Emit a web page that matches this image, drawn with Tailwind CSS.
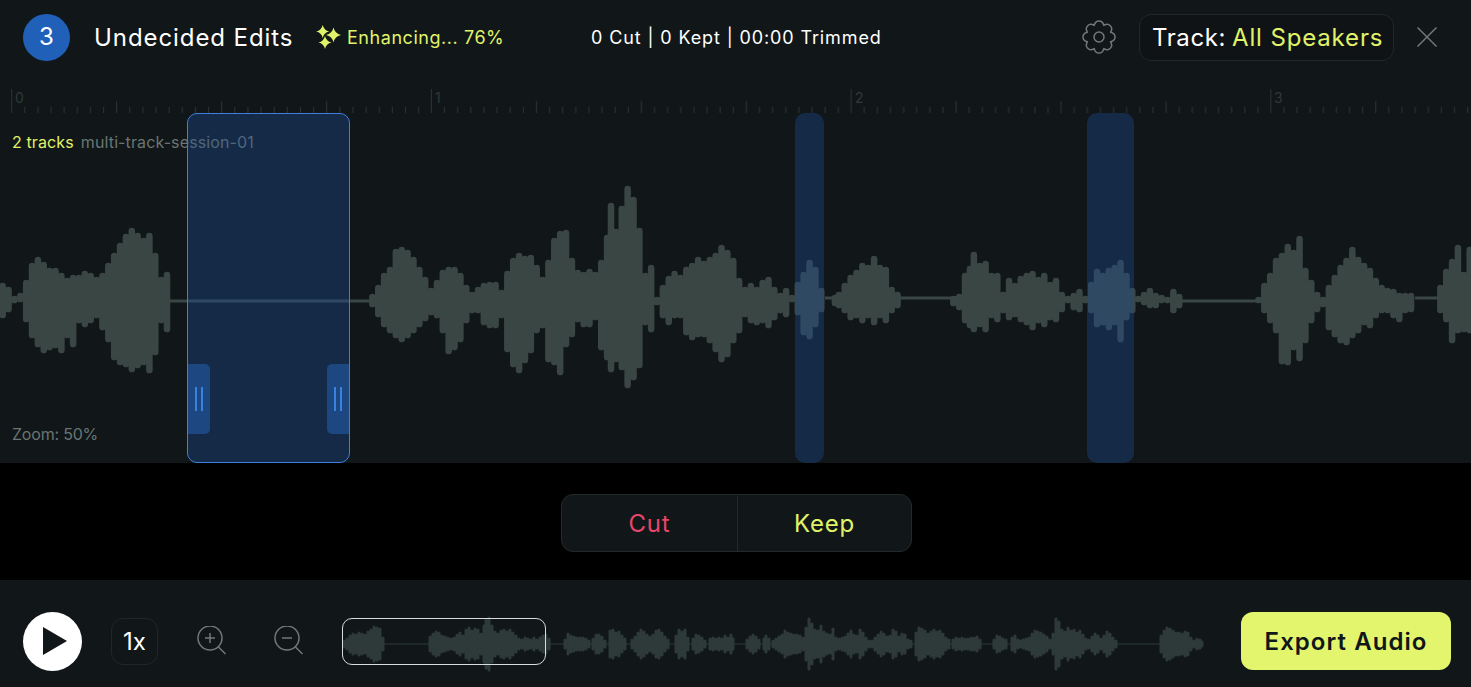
<!DOCTYPE html>
<html lang="en">
<head>
<meta charset="utf-8">
<title>Undecided Edits</title>
<script src="https://cdn.jsdelivr.net/npm/@tailwindcss/browser@4"></script>
</head>
<body class="bg-black">
<main class="flex flex-col w-[1471px] h-[687px] overflow-hidden bg-black text-white font-[Inter,sans-serif]">
  <header class="h-[83px] pb-[9px] shrink-0 bg-[#111618] flex items-center pl-[23px]">
    <div class="w-[47px] h-[47px] rounded-full bg-[#2160b8] flex items-center justify-center text-[24px]">3</div>
    <h1 class="ml-[24px] w-[199px] pt-[2px] text-[24px] tracking-[0.92px] whitespace-nowrap">Undecided Edits</h1>
    <svg class="ml-[24px] w-[24px] h-[24px] overflow-visible" viewBox="0 0 24 24" fill="#e0f368"><path d="M5.7 0 Q6.9 5.3 12.2 6.5 Q6.9 7.7 5.7 13 Q4.5 7.7 -.8 6.5 Q4.5 5.3 5.7 0Z"/><path d="M16.5 2.5 Q17.8 8.7 24 10 Q17.8 11.3 16.5 17.5 Q15.2 11.3 9 10 Q15.2 8.7 16.5 2.5Z"/><path d="M8 11 Q9.2 16.3 14.5 17.5 Q9.2 18.7 8 24 Q6.8 18.7 1.5 17.5 Q6.8 16.3 8 11Z"/></svg>
    <span class="ml-[6px] w-[244px] text-[18px] text-[#e0f368] tracking-[0.55px] whitespace-nowrap">Enhancing... 76%</span>
    <span class="text-[18px] tracking-[0.88px] whitespace-nowrap">0 Cut | 0 Kept | 00:00 Trimmed</span>
    <svg class="ml-auto w-[36px] h-[36px] translate-x-[1px]" viewBox="-1 -1 36 36" fill="none" stroke="#6f7a78" stroke-width="1.5" stroke-linejoin="round"><path d="M12.22 5.45C13.5-.5 20.5-.5 21.78 5.45C26.9 2.15 31.85 7.1 28.55 12.22C34.5 13.5 34.5 20.5 28.55 21.78C31.85 26.9 26.9 31.85 21.78 28.55C20.5 34.5 13.5 34.5 12.22 28.55C7.1 31.85 2.15 26.9 5.45 21.78C-.5 20.5-.5 13.5 5.45 12.22C2.15 7.1 7.1 2.15 12.22 5.45Z"/><circle cx="17" cy="17" r="5"/></svg>
    <div class="ml-[23px] w-[255px] h-[47px] pt-[2px] rounded-[12px] border border-[#202928] bg-[#0f1315] flex items-center pl-[12px] text-[24px] whitespace-nowrap"><span class="tracking-[0.6px]">Track:</span><span class="ml-[6px] text-[#e0f368] tracking-[0.85px]">All Speakers</span></div>
    <svg class="ml-[22px] mr-[33px] w-[22px] h-[22px]" viewBox="0 0 22 22" fill="none" stroke="#6f7a78" stroke-width="1.5"><path d="M1.5 1.5 20.5 20.5M20.5 1.5 1.5 20.5"/></svg>
  </header>

  <section class="relative h-[380px] shrink-0 bg-[#111618] overflow-hidden">
    <svg class="absolute left-0 top-[6px] w-[1471px] h-[24px]" viewBox="0 0 1471 24">
      <defs><pattern id="ticks" patternUnits="userSpaceOnUse" x="11.2" y="0" width="419.7" height="24"><path fill="none" stroke="#2b3533" stroke-width="1" d="M.5 0V24M105.5 12V24M210.5 12V24M315.5 12V24M13.6 18V24M26.75 18V24M39.9 18V24M53 18V24M66.1 18V24M79.25 18V24M92.4 18V24M118.6 18V24M131.75 18V24M144.9 18V24M158 18V24M171.1 18V24M184.25 18V24M197.4 18V24M223.6 18V24M236.75 18V24M249.9 18V24M263 18V24M276.1 18V24M289.25 18V24M302.4 18V24M328.6 18V24M341.75 18V24M354.9 18V24M368 18V24M381.1 18V24M394.25 18V24M407.4 18V24"/></pattern></defs>
      <rect width="1471" height="24" fill="url(#ticks)"/>
    </svg>
    <span class="absolute left-[15px] top-[6px] text-[14px] leading-[17px] text-[#2f3a38]">0</span>
    <span class="absolute left-[435px] top-[6px] text-[14px] leading-[17px] text-[#2f3a38]">1</span>
    <span class="absolute left-[855px] top-[6px] text-[14px] leading-[17px] text-[#2f3a38]">2</span>
    <span class="absolute left-[1274px] top-[6px] text-[14px] leading-[17px] text-[#2f3a38]">3</span>

    <svg class="absolute left-0 top-0 w-[1471px] h-[380px]" viewBox="0 -218 1471 380" fill="none" stroke="#3a4644">
      <path stroke-width="3" d="M170 0H370M825 -3H836M900 -3H956M1180 0H1263M1415 -3H1440"/>
      <g transform="translate(2.7 0) scale(.978 1)"><path stroke-width="6.7" stroke-linecap="round" d="M0-15V14M6-11V8M12-1V-2M18-5V-2M24-18V18M30-35V34M36-41V43M42-36V49M48-30V46M54-30V44M60-25V49M66-20V34M72-23V43M78-23V19M84-27V23M90-25V19M96-21V14M102-25V26M108-35V38M114-45V56M120-55V61M126-64V63M132-70V68M138-65V64M144-60V61M150-65V69M156-45V51M162-21V19M168-26V28M378-4V3M384-13V13M390-25V23M396-31V29M402-49V34M408-51V38M414-48V34M420-41V29M426-31V23M432-21V17M438-10V11M444-18V14M450-28V29M456-31V50M462-31V46M468-25V38M474-13V19M480-6V9M486-11V9M492-15V21M498-16V24M504-16V24M510-8V14M516-27V48M522-40V63M528-45V69M534-42V59M540-43V49M546-33V29M552-21V24M558-38V58M564-60V61M570-67V71M576-68V43M582-40V33M588-28V18M594-26V23M600-29V23M606-26V16M612-38V46M618-63V56M622-95V68M627-69V58M633-92V66M639-112V84M645-101V76M651-70V64M657-25V21M663-33V28M669-1V1M675-13V14M681-22V21M687-27V14M693-23V14M699-31V31M705-35V36M711-41V33M717-37V33M723-41V39M729-45V48M735-53V58M741-48V53M747-40V39M753-20V29M759-11V13M765-15V19M771-11V21M777-18V19M783-21V24M789-11V16M795-5V9M801-10V13M807-3V-2M813-16V11M819-26V31M825-38V35M831-31V23M837-10V8M851-3V2M855-6V4M861-15V9M867-23V16M873-28V14M879-35V19M885-33V14M891-42V21M897-33V14M903-31V19M909-11V9M915-6V4M972-2V2M978-4V6M984-25V19M989-32V24M993-46V28M999-35V23M1005-37V28M1011-25V14M1017-25V18M1023-6V9M1029-20V16M1035-15V13M1041-22V18M1047-25V21M1053-27V26M1059-21V19M1065-25V23M1071-16V16M1077-20V18M1083-6V8M1089-1V-2M1095-5V6M1101-9V8M1107-1V-2M1113-16V9M1119-29V23M1125-25V21M1131-30V26M1137-33V21M1143-38V38M1149-25V16M1155-10V9M1161-2V-2M1167-6V1M1173-10V4M1179-5V4M1185-1V-3M1191-1V-1M1197-9V9M1203-4V4M1284-1V-1M1290-15V9M1296-25V19M1302-40V29M1308-45V60M1314-54V61M1320-48V46M1326-62V57M1332-30V39M1338-18V19M1344-6V8M1350-1V3M1356-13V26M1362-23V33M1368-33V39M1374-40V41M1380-51V34M1386-41V29M1392-35V21M1398-30V24M1404-20V14M1410-13V9M1416-10V9M1422-9V14M1428-5V18M1434-5V9M1440-5V8M1470-13V9M1476-29V18M1482-39V39M1488-53V29M1494-26V28M1500-51V29"/></g>
    </svg>

    <p class="absolute left-[12px] top-[50px] text-[16px] leading-[19px] tracking-[0.12px] whitespace-nowrap text-[#6a7573]"><span class="text-[#e0f368] mr-[7px]">2 tracks</span>multi-track-session-01</p>
    <p class="absolute left-[12px] top-[342px] text-[16px] leading-[19px] tracking-[-0.2px] text-[#6a7573]">Zoom: 50%</p>

    <div class="absolute left-[187px] top-[30px] w-[163px] h-[350px] rounded-[10px] border border-[#3d7fdc] bg-[#1e5096]/37">
      <div class="absolute left-0 top-[250px] w-[22px] h-[70px] rounded-r-[5px] bg-[#1f4c8c]/85 flex items-center justify-center gap-[4px]"><i class="block w-[2px] h-[24px] bg-[#3b82e0]"></i><i class="block w-[2px] h-[24px] bg-[#3b82e0]"></i></div>
      <div class="absolute right-0 top-[250px] w-[22px] h-[70px] rounded-l-[5px] bg-[#1f4c8c]/85 flex items-center justify-center gap-[4px]"><i class="block w-[2px] h-[24px] bg-[#3b82e0]"></i><i class="block w-[2px] h-[24px] bg-[#3b82e0]"></i></div>
    </div>
    <div class="absolute left-[795px] top-[30px] w-[29px] h-[350px] rounded-[10px] bg-[#1e5096]/37"></div>
    <div class="absolute left-[1087px] top-[30px] w-[47px] h-[350px] rounded-[10px] bg-[#1e5096]/37"></div>
  </section>

  <section class="h-[117px] shrink-0 bg-black flex items-center justify-center pt-[3px] pl-[2px]">
    <div class="flex w-[351px] h-[58px] pt-[1px] rounded-[12px] border border-[#222b2a] bg-[#111618] text-[24px] tracking-[0.8px]">
      <button class="w-[176px] text-[#e8476b] border-r border-[#222b2a]">Cut</button>
      <button class="flex-1 text-[#e0f368]">Keep</button>
    </div>
  </section>

  <footer class="flex-1 bg-[#111618] flex items-center pl-[23px] pr-[20px] pt-[15px]">
    <button class="w-[59px] h-[59px] rounded-full bg-white flex items-center justify-center shrink-0">
      <svg class="w-[24px] h-[28px] ml-[4px]" viewBox="0 0 24 28" fill="#111618"><path d="M0 0 24 14 0 28Z"/></svg>
    </button>
    <div class="ml-[29px] w-[47px] h-[47px] pt-[2px] rounded-[12px] border border-[#1f2827] flex items-center justify-center text-[24px] shrink-0">1x</div>
    <svg class="ml-[38px] w-[30px] h-[30px] shrink-0" viewBox="0 0 30 30" fill="none" stroke="#6f7a78" stroke-width="1.5"><circle cx="14" cy="12" r="12"/><path d="M22.5 21 29.5 28M14 7V17M9 12H19"/></svg>
    <svg class="ml-[47px] w-[30px] h-[30px] shrink-0" viewBox="0 0 30 30" fill="none" stroke="#6f7a78" stroke-width="1.5"><circle cx="14" cy="12" r="12"/><path d="M22.5 21 29.5 28M9 12H19"/></svg>
    <div class="relative ml-[39px] w-[864px] h-[48px] shrink-0">
      <svg class="absolute inset-0 w-[864px] h-[48px] overflow-visible" viewBox="343 -27 864 48" fill="none" stroke="#2e3a3a">
        <path stroke-width="1" d="M345 0H1162"/>
        <path stroke-width="3" stroke-linecap="round" d="M345-3V3M348-5V5M351-8V8M354-10V10M357-9V9M360-11V11M363-10V10M366-9V9M369-12V12M372-14V14M375-17V17M378-16V16M381-15V15M384-6V6M431-7V7M434-10V10M437-12V12M440-11V11M443-8V8M446-7V7M449-6V6M452-5V5M455-6V6M458-9V9M461-11V11M464-8V8M467-14V14M470-16V16M473-13V13M476-15V15M479-14V14M482-10V10M485-18V18M487-24V24M490-26V26M493-18V18M496-12V12M499-10V10M502-13V13M505-14V14M508-12V12M511-14V14M514-11V11M517-8V8M520-5V5M523-4V4M526-6V6M529-5V5M532-4V4M535-6V6M538-4V4M541-6V6M544-8V8M547-9V9M550-5V5M566-4V4M569-10V10M572-8V8M575-7V7M578-6V6M581-6V6M584-6V6M587-5V5M590-3V3M594-5V5M597-9V9M600-9V9M603-7V7M606-3V3M611-13V13M614-14V14M617-11V11M620-12V12M623-8V8M626-5V5M633-4V4M636-7V7M639-11V11M642-14V14M645-12V12M648-9V9M651-7V7M654-9V9M657-13V13M660-14V14M663-11V11M666-7V7M669-4V4M677-8V8M680-14V14M683-12V12M686-14V14M689-6V6M694-5V5M697-9V9M700-8V8M703-6V6M706-3V3M711-5V5M714-6V6M717-5V5M720-6V6M723-5V5M726-8V8M729-6V6M732-9V9M734-5V5M748-4V4M751-7V7M754-9V9M757-7V7M760-4V4M765-5V5M767-8V8M770-5V5M774-3V3M777-5V5M780-7V7M783-9V9M786-13V13M789-11V11M792-10V10M795-9V9M798-9V9M801-8V8M804-6V6M807-16V16M810-25V25M813-20V20M816-14V14M819-13V13M822-18V18M825-12V12M828-10V10M831-9V9M834-15V15M837-6V6M840-5V5M843-6V6M846-7V7M849-10V10M852-13V13M855-9V9M858-8V8M861-14V14M864-11V11M867-6V6M870-3V3M873-3V3M876-6V6M879-9V9M882-12V12M885-10V10M888-7V7M891-8V8M894-14V14M897-12V12M900-7V7M903-10V10M906-9V9M909-4V4M912-3V3M917-11V11M920-16V16M923-15V15M926-13V13M929-10V10M932-12V12M935-14V14M938-12V12M941-13V13M944-10V10M947-6V6M950-4V4M954-4V4M957-6V6M960-5V5M963-6V6M966-5V5M969-5V5M972-6V6M975-6V6M978-7V7M981-4V4M995-4V4M998-8V8M1001-7V7M1004-5V5M1007-4V4M1013-6V6M1016-8V8M1019-4V4M1021-3V3M1024-4V4M1027-5V5M1030-6V6M1033-10V10M1036-13V13M1039-12V12M1042-11V11M1045-9V9M1048-7V7M1051-4V4M1054-10V10M1057-25V25M1060-22V22M1063-14V14M1066-12V12M1069-16V16M1072-13V13M1075-14V14M1078-11V11M1081-13V13M1084-9V9M1087-5V5M1090-4V4M1093-7V7M1096-10V10M1099-8V8M1102-5V5M1105-8V8M1108-12V12M1111-10V10M1114-6V6M1117-3V3M1162-8V8M1165-13V13M1168-16V16M1171-15V15M1174-13V13M1177-11V11M1180-11V11M1183-10V10M1186-12V12M1189-11V11M1192-6V6M1195-3V3M1198-5V5M1201-4V4M1203-2V2"/>
      </svg>
      <div class="absolute left-0 top-[1px] w-[204px] h-[47px] rounded-[10px] border-[1.5px] border-[#d8dcdb]"></div>
    </div>
    <button class="ml-auto w-[210px] h-[58px] pt-[2px] rounded-[12px] bg-[#e2f56d] text-[#111618] text-[24px] font-semibold tracking-[1.05px] whitespace-nowrap shrink-0">Export Audio</button>
  </footer>
</main>
</body>
</html>
